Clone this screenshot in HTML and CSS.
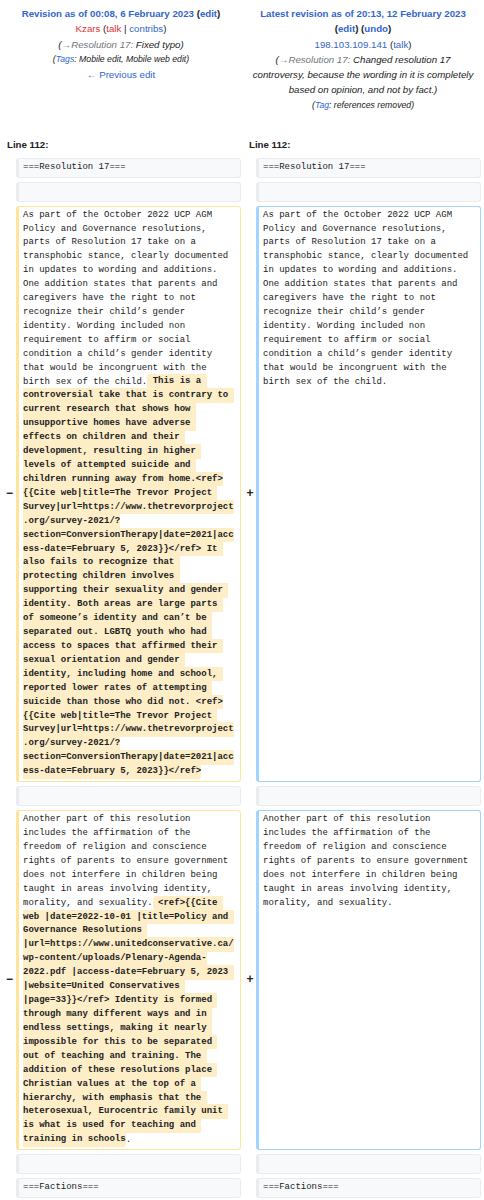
FILE: index.html
```html
<!DOCTYPE html>
<html lang="en">
<head>
<meta charset="utf-8">
<title>Diff</title>
<link rel="stylesheet" href="styles.css">
</head>
<body>
<div class="header">
  <div class="rev">
    <div class="rev-title"><a href="#">Revision as of 00:08, 6 February 2023</a> (<a href="#">edit</a>)</div>
    <div><a class="new" href="#">Kzars</a> <span class="tools">(<a class="new" href="#">talk</a> | <a href="#">contribs</a>)</span></div>
    <div class="summary">(<span class="autocomment"><a href="#">→</a>Resolution 17:</span> Fixed typo)</div>
    <div class="tags">(<a href="#">Tags</a>: Mobile edit, Mobile web edit)</div>
    <div><a href="#">← Previous edit</a></div>
  </div>
  <div class="rev">
    <div class="rev-title"><a href="#">Latest revision as of 20:13, 12 February 2023</a> (<a href="#">edit</a>) (<a href="#">undo</a>)</div>
    <div><a href="#">198.103.109.141</a> (<a href="#">talk</a>)</div>
    <div class="summary">(<span class="autocomment"><a href="#">→</a>Resolution 17:</span> Changed resolution 17 controversy, because the wording in it is completely based on opinion, and not by fact.)</div>
    <div class="tags">(<a href="#">Tag</a>: references removed)</div>
  </div>
</div>

<div class="diff">
  <div class="lineno">Line 112:</div>
  <div class="lineno lineno-new">Line 112:</div>

  <div class="marker"></div>
  <div class="cell ctx">===Resolution 17===</div>
  <div class="marker"></div>
  <div class="cell ctx">===Resolution 17===</div>

  <div class="marker"></div>
  <div class="cell ctx"><br></div>
  <div class="marker"></div>
  <div class="cell ctx"><br></div>

  <div class="marker">−</div>
  <div class="cell del">As part of the October 2022 UCP AGM Policy and Governance resolutions, parts of Resolution 17 take on a transphobic stance, clearly documented in updates to wording and additions. One addition states that parents and caregivers have the right to not recognize their child’s gender identity. Wording included non requirement to affirm or social condition a child’s gender identity that would be incongruent with the birth sex of the child.<span class="chg"> This is a controversial take that is contrary to current research that shows how unsupportive homes have adverse effects on children and their development, resulting in higher levels of attempted suicide and children running away from home.&lt;ref&gt;<wbr>{{Cite web|title=The Trevor Project Survey|url=https://www.thetrevorproject.org/survey-2021/?section=ConversionTherapy|date=2021|access-date=February 5, 2023}}&lt;/ref&gt; It also fails to recognize that protecting children involves supporting their sexuality and gender identity. Both areas are large parts of someone’s identity and can’t be separated out. LGBTQ youth who had access to spaces that affirmed their sexual orientation and gender identity, including home and school, reported lower rates of attempting suicide than those who did not. &lt;ref&gt;<wbr>{{Cite web|title=The Trevor Project Survey|url=https://www.thetrevorproject.org/survey-2021/?section=ConversionTherapy|date=2021|access-date=February 5, 2023}}&lt;/ref&gt;</span></div>
  <div class="marker">+</div>
  <div class="cell add">As part of the October 2022 UCP AGM Policy and Governance resolutions, parts of Resolution 17 take on a transphobic stance, clearly documented in updates to wording and additions. One addition states that parents and caregivers have the right to not recognize their child’s gender identity. Wording included non requirement to affirm or social condition a child’s gender identity that would be incongruent with the birth sex of the child.</div>

  <div class="marker"></div>
  <div class="cell ctx"><br></div>
  <div class="marker"></div>
  <div class="cell ctx"><br></div>

  <div class="marker">−</div>
  <div class="cell del">Another part of this resolution includes the affirmation of the freedom of religion and conscience rights of parents to ensure government does not interfere in children being taught in areas involving identity, morality, and sexuality.<span class="chg"> &lt;ref&gt;{{Cite web |date=2022-10-01 |title=Policy and Governance Resolutions |url=https://www.unitedconservative.ca/wp-content/uploads/Plenary-Agenda-2022.pdf |access-date=February 5, 2023 |website=United Conservatives |page=33}}&lt;/ref&gt; Identity is formed through many different ways and in endless settings, making it nearly impossible for this to be separated out of teaching and training. The addition of these resolutions place Christian values at the top of a hierarchy, with emphasis that the heterosexual, Eurocentric family unit is what is used for teaching and training in schools</span>.</div>
  <div class="marker">+</div>
  <div class="cell add">Another part of this resolution includes the affirmation of the freedom of religion and conscience rights of parents to ensure government does not interfere in children being taught in areas involving identity, morality, and sexuality.</div>

  <div class="marker"></div>
  <div class="cell ctx"><br></div>
  <div class="marker"></div>
  <div class="cell ctx"><br></div>

  <div class="marker"></div>
  <div class="cell ctx">===Factions===</div>
  <div class="marker"></div>
  <div class="cell ctx">===Factions===</div>
</div>
</body>
</html>
```

FILE: styles.css
```css
html, body {
  margin: 0;
  padding: 0;
  background: #ffffff;
}

body {
  font-family: "Liberation Sans", Arial, sans-serif;
  font-size: 9.7px;
  color: #202122;
}

a {
  color: #3366cc;
  text-decoration: none;
}

a.new {
  color: #dd3333;
}

.header {
  display: grid;
  grid-template-columns: 1fr 1fr;
  padding-top: 6px;
}

.rev {
  text-align: center;
  padding: 0 8px;
  line-height: 15.3px;
}

.rev-title {
  font-weight: bold;
}

.summary {
  font-style: italic;
}

.autocomment,
.autocomment a {
  color: #72777d;
}

.tags {
  font-style: italic;
  font-size: 8.7px;
  line-height: 13.5px;
  padding-top: 1.5px;
}

.diff {
  display: grid;
  grid-template-columns: 16px 225px 15px 225px;
  row-gap: 4px;
  margin-top: 22px;
  font-family: "Liberation Mono", "DejaVu Sans Mono", monospace;
  font-size: 9px;
  line-height: 13.92px;
  color: #202122;
}

.lineno {
  grid-column: span 2;
  font-family: "Liberation Sans", Arial, sans-serif;
  font-weight: bold;
  font-size: 9.7px;
  line-height: 15px;
  padding: 2px 0 2px 7px;
}

.lineno-new {
  padding-left: 8px;
}

.marker {
  display: flex;
  align-items: center;
  justify-content: center;
  padding-left: 3px;
  font-family: "Liberation Sans", Arial, sans-serif;
  font-weight: bold;
  font-size: 12px;
  color: #202122;
}

.cell {
  white-space: break-spaces;
  overflow-wrap: break-word;
  border-style: solid;
  border-width: 1px 1px 1px 3px;
  border-radius: 3px;
  padding: 2px 4px;
}

.ctx {
  background: #f8f9fa;
  border-color: #eaecf0;
}

.del {
  border-color: #ffe49c;
}

.add {
  border-color: #a3d3ff;
}

.chg {
  font-weight: bold;
  background: #feeec8;
  padding: 2.25px 0;
  border-radius: 3px;
}
```
